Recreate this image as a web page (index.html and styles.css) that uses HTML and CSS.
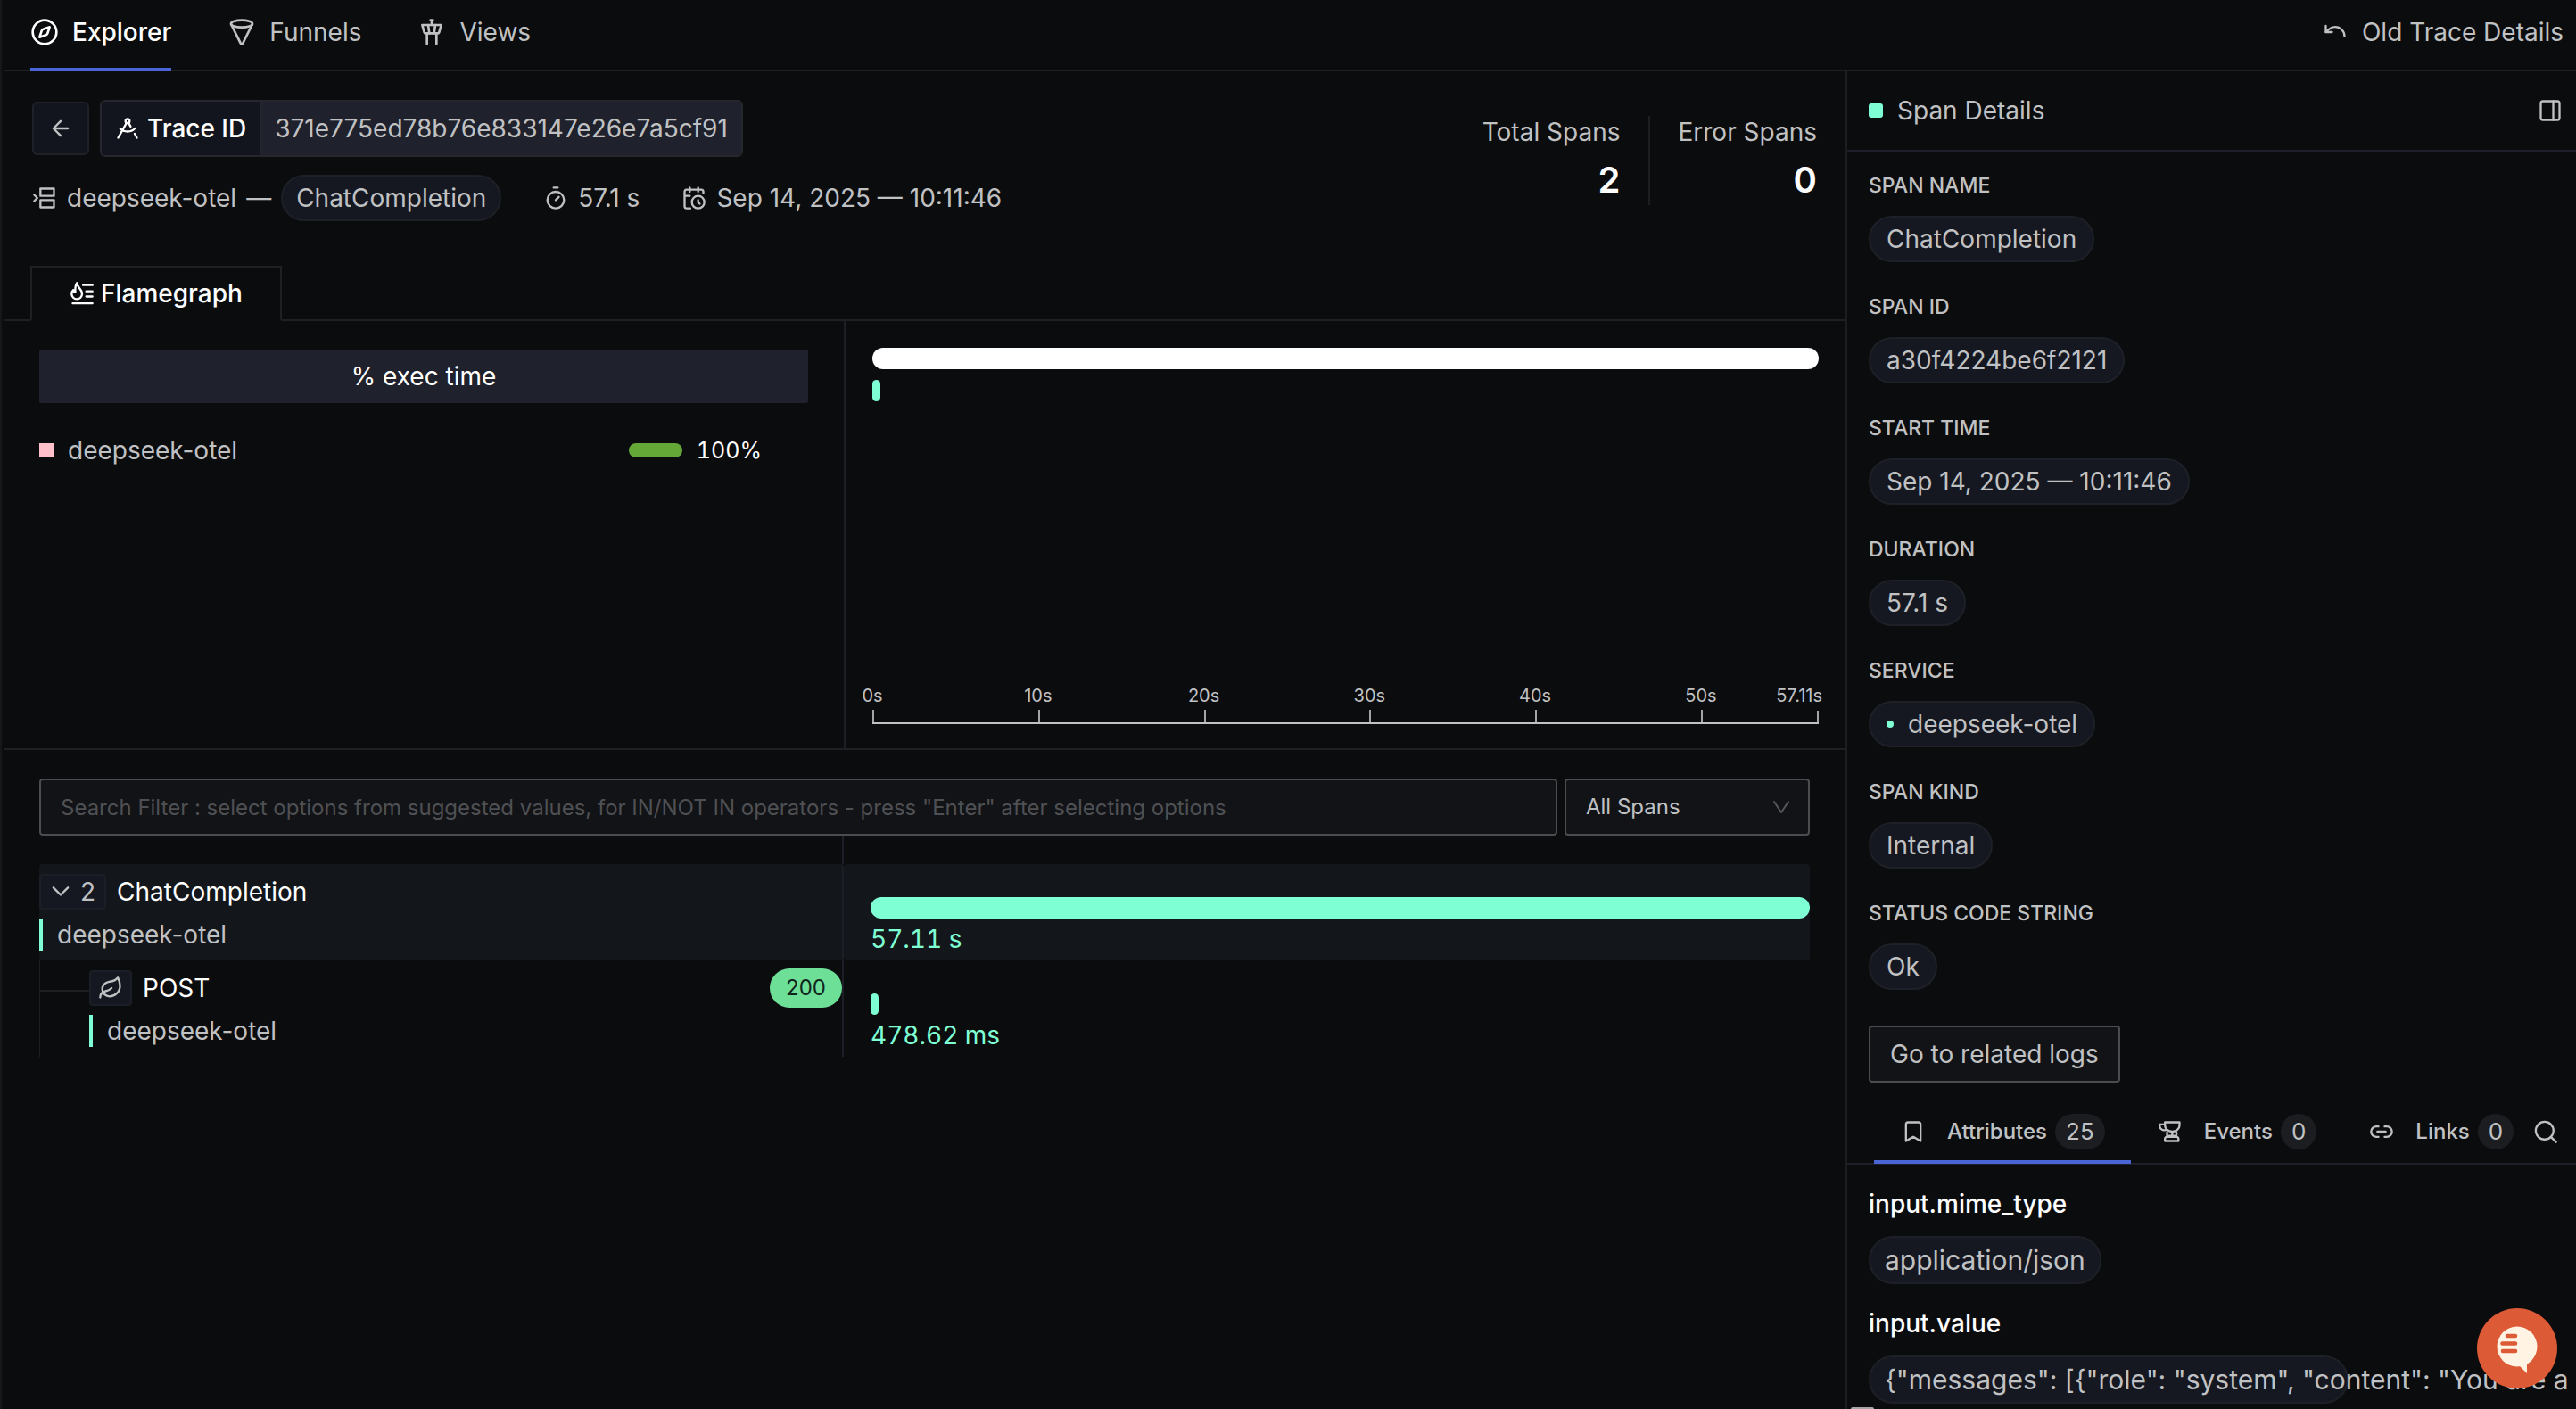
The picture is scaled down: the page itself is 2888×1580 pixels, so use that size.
FILE: index.html
```
<!DOCTYPE html>
<html lang="en">
<head>
    <meta charset="UTF-8">
    <meta name="viewport" content="width=device-width, initial-scale=1.0">
    <title>Trace Details</title>
    <link rel="stylesheet" href="styles.css">
</head>
<body>

    <!-- Top navigation -->
    <nav class="topnav">
        <a href="#" class="nav-link active">
            <svg class="icon icon-lg" viewBox="0 0 24 24"><circle cx="12" cy="12" r="10"/><path d="m16.24 7.76-1.8 5.41a2 2 0 0 1-1.27 1.27L7.76 16.24l1.8-5.41a2 2 0 0 1 1.27-1.27z"/></svg>
            Explorer
        </a>
        <a href="#" class="nav-link">
            <svg class="icon icon-lg" viewBox="0 0 24 24"><ellipse cx="12" cy="5" rx="9" ry="3"/><path d="m3.1 5.45 8 15.98a1 1 0 0 0 1.8 0l8-15.98"/></svg>
            Funnels
        </a>
        <a href="#" class="nav-link">
            <svg class="icon icon-lg" viewBox="0 0 24 24"><path d="M18.2 12.27 20 6H4l1.8 6.27a1 1 0 0 0 .95.73h10.5a1 1 0 0 0 .96-.73Z"/><path d="M8 13v9M16 22v-9M9 6l1 7M15 6l-1 7M12 6V2M13 2h-2"/></svg>
            Views
        </a>
        <a href="#" class="old-link">
            <svg class="icon" viewBox="0 0 24 24"><path d="M3 6v6h6"/><path d="M21 16a9 9 0 0 0-9-9 9 9 0 0 0-6 2.3L3 12"/></svg>
            Old Trace Details
        </a>
    </nav>

    <div class="layout">
        <main class="main">

            <!-- Trace header -->
            <header class="trace-header">
                <div class="trace-info">
                    <div class="trace-row">
                        <button class="back-btn" aria-label="Back">
                            <svg class="icon" viewBox="0 0 24 24"><path d="m12 19-7-7 7-7M19 12H5"/></svg>
                        </button>
                        <div class="trace-id">
                            <div class="trace-id-label">
                                <svg class="icon" viewBox="0 0 24 24"><circle cx="12" cy="5" r="2"/><path d="m12.99 6.74 1.93 3.44M19.14 12a10 10 0 0 1-14.27 0M21 21l-2.16-3.84M3 21l8.02-14.26"/></svg>
                                Trace ID
                            </div>
                            <div class="trace-id-value">371e775ed78b76e833147e26e7a5cf91</div>
                        </div>
                    </div>
                    <div class="meta-row">
                        <div class="meta-service">
                            <svg class="icon" viewBox="0 0 24 24"><path d="M8 3h13v7H8zM8 14h13v7H8zM2 9l3 3-3 3"/></svg>
                            <span>deepseek-otel</span>
                            <span>—</span>
                            <span class="pill">ChatCompletion</span>
                        </div>
                        <div class="meta-item">
                            <svg class="icon" viewBox="0 0 24 24"><path d="M10 2h4M12 14l3-3"/><circle cx="12" cy="14" r="8"/></svg>
                            57.1 s
                        </div>
                        <div class="meta-item">
                            <svg class="icon" viewBox="0 0 24 24"><path d="M21 7.5V6a2 2 0 0 0-2-2H5a2 2 0 0 0-2 2v14a2 2 0 0 0 2 2h3.5M16 2v4M8 2v4M3 10h5M17.5 17.5 16 16.3V14"/><circle cx="16" cy="16" r="6"/></svg>
                            Sep 14, 2025 — 10:11:46
                        </div>
                    </div>
                </div>
                <div class="stats">
                    <div class="stat"><span>Total Spans</span><strong>2</strong></div>
                    <div class="stat"><span>Error Spans</span><strong>0</strong></div>
                </div>
            </header>

            <!-- Flamegraph -->
            <div class="flame-tabs">
                <button class="flame-tab">
                    <svg class="icon" viewBox="0 0 24 24"><path d="M7 2c0 4 5 6 5 10.5a5 5 0 0 1-10 0c0-2 .8-3 1.6-3.8.3 1.3 1 2.1 1.9 2.3C5.5 8 5 5 7 2zM13 4h9M16 10h6M16 15h6M3 21.5h19"/></svg>
                    Flamegraph
                </button>
            </div>
            <section class="flame">
                <div class="exec">
                    <div class="exec-title">% exec time</div>
                    <div class="exec-row">
                        <span class="square pink"></span>
                        <span class="exec-name">deepseek-otel</span>
                        <span class="exec-bar"></span>
                        <span class="exec-value">100%</span>
                    </div>
                </div>
                <div class="flame-chart">
                    <div class="bar white"></div>
                    <div class="bar mint" style="width: 0.84%"></div>
                    <div class="axis">
                        <div class="tick"><span>0s</span></div>
                        <div class="tick"><span>10s</span></div>
                        <div class="tick"><span>20s</span></div>
                        <div class="tick"><span>30s</span></div>
                        <div class="tick"><span>40s</span></div>
                        <div class="tick tick-last"><span>50s</span><span class="end">57.11s</span></div>
                    </div>
                </div>
            </section>

            <!-- Waterfall -->
            <section class="waterfall">
                <div class="filters">
                    <input class="search" type="text" aria-label="Search filter" placeholder="Search Filter : select options from suggested values, for IN/NOT IN operators - press &quot;Enter&quot; after selecting options">
                    <div class="select-wrap">
                        <select aria-label="Span type">
                            <option>All Spans</option>
                        </select>
                        <svg class="icon select-arrow" viewBox="0 0 24 24"><path d="m4 6 8 12 8-12"/></svg>
                    </div>
                </div>
                <div class="spans">
                    <div class="spacer"></div>
                    <div class="spacer"></div>

                    <div class="span-name selected">
                        <div class="span-title">
                            <button class="chip">
                                <svg class="icon" viewBox="0 0 24 24"><path d="m5 8 7 7 7-7"/></svg>
                                2
                            </button>
                            ChatCompletion
                        </div>
                        <div class="span-service">deepseek-otel</div>
                    </div>
                    <div class="span-bar selected">
                        <div class="bar mint"></div>
                        <span>57.11 s</span>
                    </div>

                    <div class="span-name child">
                        <div class="connector"></div>
                        <div class="child-body">
                            <div class="span-title">
                                <span class="chip chip-leaf">
                                    <svg class="icon" viewBox="0 0 24 24"><path d="M11 20A7 7 0 0 1 9.8 6.1C15.5 5 17 4.48 19 2c1 2 2 4.18 2 8 0 5.5-4.78 10-10 10Z"/><path d="M2 21c0-3 1.85-5.36 5.08-6C9.5 14.52 12 13 13 12"/></svg>
                                </span>
                                POST
                                <span class="status">200</span>
                            </div>
                            <div class="span-service">deepseek-otel</div>
                        </div>
                    </div>
                    <div class="span-bar">
                        <div class="bar mint" style="width: 0.84%"></div>
                        <span>478.62 ms</span>
                    </div>
                </div>
            </section>
        </main>

        <!-- Span details -->
        <aside class="details">
            <div class="details-header">
                <span class="square mint"></span>
                <span>Span Details</span>
                <button class="icon-btn" aria-label="Toggle panel">
                    <svg class="icon" viewBox="0 0 24 24"><rect x="3" y="3" width="18" height="18" rx="2"/><path d="M15 3v18"/></svg>
                </button>
            </div>
            <dl class="fields">
                <div><dt>SPAN NAME</dt><dd class="pill">ChatCompletion</dd></div>
                <div><dt>SPAN ID</dt><dd class="pill">a30f4224be6f2121</dd></div>
                <div><dt>START TIME</dt><dd class="pill">Sep 14, 2025 — 10:11:46</dd></div>
                <div><dt>DURATION</dt><dd class="pill">57.1 s</dd></div>
                <div><dt>SERVICE</dt><dd class="pill"><i class="dot"></i>deepseek-otel</dd></div>
                <div><dt>SPAN KIND</dt><dd class="pill">Internal</dd></div>
                <div><dt>STATUS CODE STRING</dt><dd class="pill">Ok</dd></div>
            </dl>
            <button class="logs-btn">Go to related logs</button>

            <div class="tabs">
                <button class="tab active">
                    <svg class="icon" viewBox="0 0 24 24"><path d="m19 21-7-4-7 4V5a2 2 0 0 1 2-2h10a2 2 0 0 1 2 2z"/></svg>
                    Attributes <span class="count">25</span>
                </button>
                <button class="tab">
                    <svg class="icon" viewBox="0 0 24 24"><path d="M7 3h14v3a7 6 0 0 1-14 0zM7 5H2v2a4 4 0 0 0 6 3M14 12v4M9 12.5v3.5h9v-3.5M7 21v-2a2 2 0 0 1 2-2h9a2 2 0 0 1 2 2v2z"/></svg>
                    Events <span class="count">0</span>
                </button>
                <button class="tab">
                    <svg class="icon" viewBox="0 0 24 24"><path d="M9 17H7A5 5 0 0 1 7 7h2M15 7h2a5 5 0 1 1 0 10h-2M8 12h8"/></svg>
                    Links <span class="count">0</span>
                </button>
                <button class="icon-btn tab-search" aria-label="Search attributes">
                    <svg class="icon" viewBox="0 0 24 24"><circle cx="11" cy="11" r="8.5"/><path d="m17 17 5 5"/></svg>
                </button>
            </div>

            <dl class="attributes">
                <div><dt>input.mime_type</dt><dd class="pill">application/json</dd></div>
                <div><dt>input.value</dt><dd class="pill long">{"messages": [{"role": "system", "content": "You are a</dd></div>
            </dl>
            <div class="scroll-thumb"></div>
        </aside>
    </div>

    <!-- Chat launcher -->
    <button class="chat-btn" aria-label="Open chat">
        <svg viewBox="0 0 90 90">
            <circle cx="45" cy="43" r="22.5" fill="#fff3e4"/>
            <path d="M46 63 56 73V58z" fill="#fff3e4"/>
            <path d="M34 31h9M28.5 39.5h14.5M29 48h14" stroke="#dc5a36" stroke-width="4.6" stroke-linecap="round"/>
        </svg>
    </button>

</body>
</html>
```
FILE: styles.css
```
* {
    box-sizing: border-box;
}

body {
    margin: 0;
    height: 100vh;
    overflow: hidden;
    display: flex;
    flex-direction: column;
    background-color: #0b0c0e;
    border-left: 2px solid #16171b;
    padding-left: 2px;
    color: #c0c1c3;
    font-family: Inter, "Liberation Sans", sans-serif;
    font-size: 28px;
    line-height: 36px;
}

button,
input,
select {
    font: inherit;
    color: inherit;
    background: none;
    border: none;
    padding: 0;
    margin: 0;
}

button {
    cursor: pointer;
}

a {
    color: inherit;
    text-decoration: none;
}

dl,
dd {
    margin: 0;
}

/* Icons */
.icon {
    width: 28px;
    height: 28px;
    flex-shrink: 0;
    fill: none;
    stroke: currentColor;
    stroke-width: 2;
    stroke-linecap: round;
    stroke-linejoin: round;
}

.icon-lg {
    width: 32px;
    height: 32px;
}

.icon-btn {
    display: flex;
}

.square {
    width: 16px;
    height: 16px;
}

.square.pink {
    background-color: #ffc0cb;
}

.square.mint {
    background-color: #7fffd4;
    border-radius: 3px;
}

/* Top navigation */
.topnav {
    display: flex;
    align-items: stretch;
    gap: 63px;
    height: 80px;
    flex-shrink: 0;
    padding: 0 14px 0 30px;
    border-bottom: 2px solid #1f2024;
}

.nav-link {
    display: flex;
    align-items: center;
    gap: 15px;
    height: 80px;
    padding-bottom: 4px;
    border-bottom: 4px solid transparent;
}

.nav-link.active {
    color: #ffffff;
    font-weight: 500;
    border-bottom-color: #4a66d6;
}

.old-link {
    display: flex;
    align-items: center;
    gap: 16px;
    margin-left: auto;
    padding-bottom: 6px;
}

.layout {
    display: flex;
    flex: 1;
    min-height: 0;
}

.main {
    flex: 1;
    min-width: 0;
}

/* Pills */
.pill {
    display: flex;
    align-items: center;
    width: fit-content;
    height: 52px;
    padding: 0 16px;
    border: 2px solid #1e2027;
    border-radius: 26px;
    background-color: #151821;
}

/* Trace header */
.trace-header {
    display: flex;
    justify-content: space-between;
    padding: 32px 32px 50px;
}

.trace-info {
    display: flex;
    flex-direction: column;
    gap: 20px;
}

.trace-row {
    display: flex;
    align-items: center;
    gap: 12px;
}

.back-btn {
    display: flex;
    align-items: center;
    justify-content: center;
    width: 64px;
    height: 60px;
    border: 2px solid #1f2129;
    border-radius: 6px;
    background-color: #12151d;
}

.trace-id {
    display: flex;
    height: 64px;
    border: 2px solid #25272d;
    border-radius: 6px;
    overflow: hidden;
}

.trace-id-label {
    display: flex;
    align-items: center;
    gap: 8px;
    padding: 0 15px;
    color: #ffffff;
    font-weight: 500;
    background-color: #12151d;
}

.trace-id-value {
    display: flex;
    align-items: center;
    padding: 0 15px;
    background-color: #1f212c;
    border-left: 2px solid #25272d;
}

.meta-row {
    display: flex;
    align-items: center;
    gap: 47px;
}

.meta-service,
.meta-item {
    display: flex;
    align-items: center;
    gap: 11px;
}

.meta-service .pill {
    padding: 0 15px;
}

/* Totals */
.stats {
    display: flex;
    padding-top: 18px;
}

.stat {
    display: flex;
    flex-direction: column;
    align-items: flex-end;
    gap: 8px;
    height: 100px;
}

.stat + .stat {
    margin-left: 32px;
    padding-left: 31px;
    border-left: 2px solid #1d1e22;
}

.stat strong {
    color: #ffffff;
    font-size: 40px;
    line-height: 56px;
    font-weight: 600;
}

/* Flamegraph */
.flame-tabs {
    padding-left: 30px;
    border-bottom: 2px solid #1f2024;
}

.flame-tab {
    display: flex;
    align-items: center;
    gap: 7px;
    height: 62px;
    margin-bottom: -2px;
    padding: 0 42px;
    border: 2px solid #1f2024;
    border-bottom-color: #0b0c0e;
    background-color: #0b0c0e;
    color: #ffffff;
    font-weight: 500;
}

.flame {
    display: flex;
    height: 481px;
    border-bottom: 2px solid #1f2024;
}

.exec {
    width: 944px;
    flex-shrink: 0;
    padding: 32px 40px;
    border-right: 2px solid #1d1e23;
}

.exec-title {
    padding: 12px;
    border-radius: 2px;
    background-color: #1f212c;
    color: #ffffff;
    text-align: center;
}

.exec-row {
    display: flex;
    align-items: center;
    gap: 16px;
    margin-top: 35px;
    padding-right: 52px;
}

.exec-bar {
    width: 60px;
    height: 16px;
    margin-left: auto;
    border-radius: 8px;
    background-color: #64a838;
}

.exec-value {
    color: #ffffff;
    font-size: 25px;
    font-variant-numeric: tabular-nums;
}

.bar {
    height: 24px;
    border-radius: 12px;
}

.bar.white {
    background-color: #ffffff;
}

.bar.mint {
    background-color: #7fffd4;
}

.flame-chart {
    display: flex;
    flex-direction: column;
    gap: 12px;
    flex: 1;
    padding: 30px 30px 27px;
}

.axis {
    display: grid;
    grid-template-columns: 10fr 10fr 10fr 10fr 10fr 7.11fr;
    margin-top: auto;
    border-bottom: 2px solid #c0c1c3;
    font-size: 20px;
    line-height: 24px;
}

.tick {
    display: flex;
    justify-content: space-between;
    height: 42px;
    background: linear-gradient(#a4a5a7, #a4a5a7) left bottom / 2px 14px no-repeat;
}

.tick span {
    width: 80px;
    margin-left: -40px;
    text-align: center;
}

.tick-last {
    border-right: 2px solid transparent;
    border-image: linear-gradient(transparent 68%, #a4a5a7 68%) 0 2 0 0;
}

.tick .end {
    width: auto;
    margin: 0 -6px 0 0;
}

/* Waterfall */
.waterfall {
    padding: 32px 40px;
}

.filters {
    display: flex;
    gap: 8px;
    font-size: 24px;
}

.search {
    flex: 1;
    height: 64px;
    padding: 0 22px;
    border: 2px solid #4a4c50;
    border-radius: 4px;
    background-color: #121317;
}

.search::placeholder {
    color: #4f5053;
    opacity: 1;
}

.select-wrap {
    position: relative;
    width: 275px;
}

.select-wrap select {
    appearance: none;
    width: 100%;
    height: 64px;
    padding: 0 22px;
    border: 2px solid #4a4c50;
    border-radius: 4px;
    background-color: #121317;
}

.select-arrow {
    position: absolute;
    right: 20px;
    top: 20px;
    width: 24px;
    height: 24px;
    color: #55575b;
}

.spans {
    display: grid;
    grid-template-columns: 902px 1fr;
}

.spacer {
    height: 32px;
}

.spacer:nth-child(odd),
.span-name {
    border-right: 2px solid #1c1e28;
}

.span-name,
.span-bar {
    height: 108px;
}

.span-name.selected,
.span-bar.selected {
    background-color: #13171b;
    border-radius: 4px;
}

.span-title {
    display: flex;
    align-items: center;
    gap: 12px;
    padding-top: 8px;
    height: 54px;
    color: #ffffff;
}

.chip {
    display: flex;
    align-items: center;
    gap: 8px;
    height: 40px;
    padding: 0 10px 0 8px;
    border: 2px solid #1c1e27;
    border-radius: 4px;
    background-color: #151821;
    color: #c0c1c3;
}

.chip-leaf {
    padding: 0 8px;
}

.span-service {
    height: 36px;
    margin-top: 7px;
    padding-left: 16px;
    border-left: 4px solid #7fffd4;
}

.span-name.child {
    display: flex;
    border-left: 1px solid #1d1e22;
}

.connector {
    width: 55px;
    height: 35px;
    border-bottom: 2px solid #1d1e22;
}

.child-body {
    flex: 1;
}

.status {
    margin-left: auto;
    padding: 0 18px;
    border-radius: 22px;
    background-color: #6ddf97;
    color: #10251b;
    font-size: 24px;
    line-height: 44px;
}

.span-bar {
    padding: 37px 0 0 30px;
    color: #7fffd4;
    font-variant-numeric: tabular-nums;
}

.span-bar span {
    display: block;
    margin-top: 5px;
}

/* Span details */
.details {
    position: relative;
    width: 819px;
    flex-shrink: 0;
    overflow: hidden;
    border-left: 2px solid #1d1e22;
}

.details-header {
    display: flex;
    align-items: center;
    gap: 16px;
    height: 90px;
    padding: 0 15px 0 24px;
    border-bottom: 2px solid #1d1f2a;
}

.details-header .icon-btn {
    margin-left: auto;
}

.fields {
    display: flex;
    flex-direction: column;
    gap: 34px;
    padding: 22px 24px 0;
}

.fields dt {
    margin-bottom: 18px;
    font-size: 23px;
    line-height: 32px;
    font-weight: 500;
}

.fields .pill {
    padding: 0 18px;
}

.dot {
    width: 8px;
    height: 8px;
    margin-right: 16px;
    border-radius: 50%;
    background-color: #7fffd4;
}

.logs-btn {
    display: block;
    height: 64px;
    margin: 40px 24px 20px;
    padding: 0 22px;
    border: 2px solid #4a4c50;
    border-radius: 4px;
    background-color: #121317;
}

.tabs {
    display: flex;
    align-items: center;
    height: 72px;
    padding-left: 30px;
    border-bottom: 2px solid #1d1f2a;
    font-size: 24px;
}

.tab {
    display: flex;
    align-items: center;
    height: 72px;
    padding: 0 29px 0 30px;
    border-bottom: 4px solid transparent;
    border-top: 4px solid transparent;
    font-weight: 500;
}

.tab .icon {
    margin-right: 24px;
}

.tab.active {
    border-bottom-color: #4a66d6;
}

.tab:nth-child(3) {
    padding-right: 0;
}

.tab-search {
    margin-left: 22px;
}

.count {
    margin-left: 9px;
    padding: 0 12px;
    border-radius: 20px;
    background-color: #1b1d21;
    font-size: 26px;
    line-height: 40px;
    font-weight: 400;
}

.attributes {
    display: flex;
    flex-direction: column;
    gap: 26px;
    padding: 26px 24px 0;
}

.attributes dt {
    margin-bottom: 18px;
    color: #ffffff;
    font-weight: 500;
}

.attributes .pill {
    height: 54px;
    border-radius: 27px;
    font-size: 30px;
}

.attributes .long {
    width: 70%;
    white-space: nowrap;
}

.scroll-thumb {
    position: absolute;
    left: 4px;
    bottom: 0;
    width: 26px;
    height: 2px;
    border-radius: 2px 2px 0 0;
    background-color: #a9a4aa;
}

/* Chat launcher */
.chat-btn {
    position: fixed;
    right: 21px;
    bottom: 23px;
    width: 90px;
    height: 90px;
    border-radius: 50%;
    background-color: #dc5a36;
}

.chat-btn svg {
    display: block;
}
```
